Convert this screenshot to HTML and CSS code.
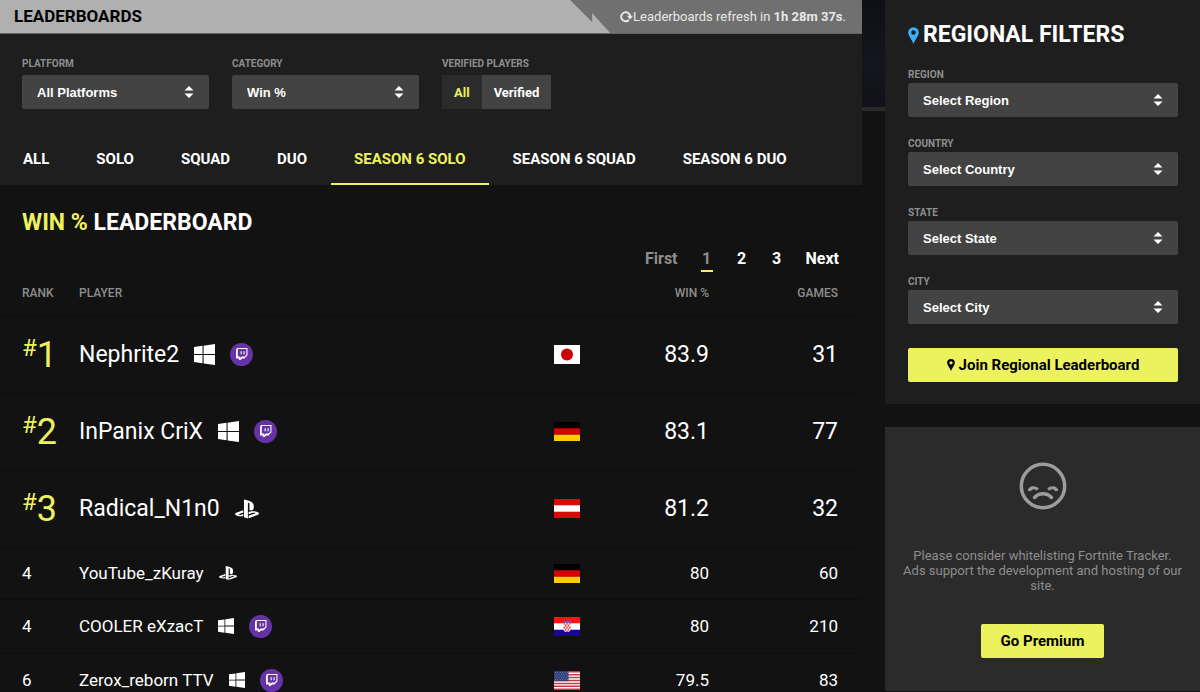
FILE: index.html
```html
<!DOCTYPE html>
<html lang="en">
<head>
<meta charset="utf-8">
<title>Leaderboards</title>
<meta name="viewport" content="width=device-width, initial-scale=1">
<link rel="stylesheet" href="styles.css">
</head>
<body>
<svg class="sprite" aria-hidden="true">
  <symbol id="windows" viewBox="0 0 24 24"><path d="M0 3.449L9.75 2.1v9.451H0m10.949-9.602L24 0v11.4H10.949M0 12.6h9.75v9.451L0 20.699M10.949 12.6H24V24l-12.9-1.801"/></symbol>
  <symbol id="playstation" viewBox="0 0 24 24"><path d="M8.984 2.596v17.547l3.915 1.261V6.688c0-.69.304-1.151.794-.991.636.18.76.814.76 1.505v5.875c2.441 1.193 4.362-.002 4.362-3.152 0-3.237-1.126-4.675-4.438-5.827-1.307-.448-3.728-1.186-5.39-1.502zm4.656 16.241l6.296-2.275c.715-.258.826-.625.246-.818-.586-.192-1.637-.139-2.357.123l-4.205 1.5V14.98l.24-.085s1.201-.42 2.913-.615c1.696-.18 3.785.03 5.437.661 1.848.601 2.04 1.472 1.576 2.072-.465.6-1.622 1.036-1.622 1.036l-8.544 3.107V18.86zM1.807 18.6c-1.9-.545-2.214-1.668-1.352-2.32.801-.586 2.16-1.052 2.16-1.052l5.615-2.013v2.313L4.205 17c-.705.271-.825.632-.239.826.586.195 1.637.15 2.343-.12L8.247 17v2.074c-.12.03-.256.044-.39.073-1.939.331-3.996.196-6.038-.479z"/></symbol>
  <symbol id="twitch" viewBox="0 0 46 46"><circle cx="23" cy="23" r="23" fill="#6533a5"/><path fill="#fff" transform="translate(11.500 10)" d="M2.149 0l-1.612 4.119v16.836h5.731v3.045h3.224l3.045-3.045h4.657l6.269-6.269v-14.686h-21.314zm19.164 13.612l-3.582 3.582h-5.731l-3.045 3.045v-3.045h-4.836v-15.045h17.194v11.463zm-3.582-7.343v6.262h-2.149v-6.262h2.149zm-5.731 0v6.262h-2.149v-6.262h2.149z"/></symbol>
  <symbol id="arrows" viewBox="0 0 10 12"><path d="M5 0l4.500 4.600H.5zM5 12L.5 7.400h9z"/></symbol>
  <symbol id="pin" viewBox="0 0 12 18"><path fill-rule="evenodd" d="M6 0a5.800 5.800 0 0 0-5.800 5.800C.2 9 3.500 12.500 6 18c2.500-5.500 5.800-9 5.800-12.200A5.800 5.800 0 0 0 6 0zm0 3.300a2.500 2.500 0 1 1 0 5 2.500 2.500 0 0 1 0-5z"/></symbol>
  <symbol id="flag-jp" viewBox="0 0 26 19"><path fill="#fff" d="M0 0h26v19H0z"/><circle cx="13" cy="9.500" r="6" fill="#d00000"/></symbol>
  <symbol id="flag-de" viewBox="0 0 26 19"><path fill="#000" d="M0 0h26v6.300H0z"/><path fill="#d80000" d="M0 6.300h26v6.400H0z"/><path fill="#fc0" d="M0 12.700h26V19H0z"/></symbol>
  <symbol id="flag-at" viewBox="0 0 26 19"><path fill="#d90a0a" d="M0 0h26v19H0z"/><path fill="#fff" d="M0 6.300h26v6.400H0z"/></symbol>
  <symbol id="flag-hr" viewBox="0 0 26 19"><path fill="#fff" d="M0 0h26v19H0z"/><path fill="#f11" d="M0 0h26v6.300H0z"/><path fill="#17069a" d="M0 12.700h26V19H0z"/><path fill="#fff" d="M9.500 5.500h7v6a3.500 3.500 0 0 1-7 0z"/><path fill="#e8343c" d="M9.500 5.500h1.400v2H9.500zm2.800 0h1.400v2h-1.400zm2.800 0h1.400v2h-1.400zm-4.200 2h1.400v2h-1.400zm2.800 0h1.400v2h-1.400zm-4.200 2h1.400v2H9.500zm2.800 0h1.400v2h-1.400zm2.800 0h1.400v2h-1.400zm-4.200 2h1.400v2h-1.400zm2.800 0h1.400v2h-1.400zm-1.400 2h1.400V15h-1.400z"/><path fill="#4a66b8" d="M9 3.300l1.300 1 1.200-1.300 1.500 1 1.500-1 1.200 1.300 1.300-1-.5 2.500h-7z"/></symbol>
  <symbol id="flag-us" viewBox="0 0 26 19"><path fill="#fff" d="M0 0h26v19H0z"/><path stroke="#bd3d44" stroke-width="1.460" d="M0 .73h26M0 3.650h26M0 6.570h26M0 9.500h26M0 12.420h26M0 15.340h26M0 18.270h26"/><path fill="#2a3f78" d="M0 0h14.500v10.200H0z"/><path stroke="#a9b3cf" stroke-width=".7" stroke-dasharray=".8 1.600" d="M1 1.500h13M2.200 3.300h11M1 5.100h13M2.200 6.900h11M1 8.700h13"/></symbol>
</svg>

<div class="page">
  <main class="main">
    <header class="topbar">
      <h1 class="topbar-title">Leaderboards</h1>
      <p class="refresh">
        <svg class="refresh-icon" viewBox="0 0 12 12" aria-hidden="true"><path fill="none" stroke="currentColor" stroke-width="1.800" d="M8.200 9.300A4.200 4.200 0 1 1 9.500 6"/><path fill="currentColor" d="M6.300 5.200H12L9.300 8.800z"/></svg><span>Leaderboards refresh in <b>1h 28m 37s</b>.</span>
      </p>
    </header>

    <section class="controls">
      <div class="filters">
        <div class="field field-narrow">
          <label class="label" for="platform">Platform</label>
          <div class="select"><select id="platform"><option>All Platforms</option></select><svg aria-hidden="true"><use href="#arrows"/></svg></div>
        </div>
        <div class="field field-narrow">
          <label class="label" for="category">Category</label>
          <div class="select"><select id="category"><option>Win %</option></select><svg aria-hidden="true"><use href="#arrows"/></svg></div>
        </div>
        <div class="field">
          <span class="label" id="verified-label">Verified Players</span>
          <div class="toggle" role="group" aria-labelledby="verified-label">
            <button class="toggle-item toggle-on" type="button" aria-pressed="true">All</button>
            <button class="toggle-item" type="button" aria-pressed="false">Verified</button>
          </div>
        </div>
      </div>
      <nav class="tabs" aria-label="Playlists">
        <a class="tab" href="#all">All</a>
        <a class="tab" href="#solo">Solo</a>
        <a class="tab" href="#squad">Squad</a>
        <a class="tab" href="#duo">Duo</a>
        <a class="tab tab-on" href="#s6-solo" aria-current="page">Season 6 Solo</a>
        <a class="tab" href="#s6-squad">Season 6 Squad</a>
        <a class="tab" href="#s6-duo">Season 6 Duo</a>
      </nav>
    </section>

    <section class="board">
      <h2 class="heading"><span class="accent">Win %</span> Leaderboard</h2>
      <nav class="pager" aria-label="Pages">
        <span class="pager-item pager-off">First</span>
        <span class="pager-item pager-off pager-num pager-on" aria-current="page">1</span>
        <a class="pager-item pager-num" href="#page-2">2</a>
        <a class="pager-item pager-num" href="#page-3">3</a>
        <a class="pager-item" href="#page-next">Next</a>
      </nav>
      <table class="table">
        <thead>
          <tr><th class="col-rank">Rank</th><th>Player</th><th class="col-flag"></th><th class="col-win">Win %</th><th class="col-games">Games</th></tr>
        </thead>
        <tbody>
          <tr class="top">
            <td class="col-rank"><span class="place"><span class="hash">#</span>1</span></td>
            <td><div class="player"><a href="#p1">Nephrite2</a><svg class="platform"><use href="#windows"/></svg><svg class="twitch"><use href="#twitch"/></svg></div></td>
            <td class="col-flag"><svg class="flag"><use href="#flag-jp"/></svg></td><td class="col-win">83.9</td><td class="col-games">31</td>
          </tr>
          <tr class="top">
            <td class="col-rank"><span class="place"><span class="hash">#</span>2</span></td>
            <td><div class="player"><a href="#p2">InPanix CriX</a><svg class="platform"><use href="#windows"/></svg><svg class="twitch"><use href="#twitch"/></svg></div></td>
            <td class="col-flag"><svg class="flag"><use href="#flag-de"/></svg></td><td class="col-win">83.1</td><td class="col-games">77</td>
          </tr>
          <tr class="top">
            <td class="col-rank"><span class="place"><span class="hash">#</span>3</span></td>
            <td><div class="player"><a href="#p3">Radical_N1n0</a><svg class="platform playstation"><use href="#playstation"/></svg></div></td>
            <td class="col-flag"><svg class="flag"><use href="#flag-at"/></svg></td><td class="col-win">81.2</td><td class="col-games">32</td>
          </tr>
          <tr>
            <td class="col-rank">4</td>
            <td><div class="player"><a href="#p4">YouTube_zKuray</a><svg class="platform playstation"><use href="#playstation"/></svg></div></td>
            <td class="col-flag"><svg class="flag"><use href="#flag-de"/></svg></td><td class="col-win">80</td><td class="col-games">60</td>
          </tr>
          <tr>
            <td class="col-rank">4</td>
            <td><div class="player"><a href="#p5">COOLER eXzacT</a><svg class="platform"><use href="#windows"/></svg><svg class="twitch"><use href="#twitch"/></svg></div></td>
            <td class="col-flag"><svg class="flag"><use href="#flag-hr"/></svg></td><td class="col-win">80</td><td class="col-games">210</td>
          </tr>
          <tr>
            <td class="col-rank">6</td>
            <td><div class="player"><a href="#p6">Zerox_reborn TTV</a><svg class="platform"><use href="#windows"/></svg><svg class="twitch"><use href="#twitch"/></svg></div></td>
            <td class="col-flag"><svg class="flag"><use href="#flag-us"/></svg></td><td class="col-win">79.5</td><td class="col-games">83</td>
          </tr>
        </tbody>
      </table>
    </section>
  </main>

  <div class="backdrop"></div>

  <aside class="side">
    <form class="regional">
      <h2 class="heading regional-title"><svg class="title-pin" aria-hidden="true"><use href="#pin"/></svg>Regional Filters</h2>
      <div class="field">
        <label class="label" for="region">Region</label>
        <div class="select"><select id="region"><option>Select Region</option></select><svg aria-hidden="true"><use href="#arrows"/></svg></div>
      </div>
      <div class="field">
        <label class="label" for="country">Country</label>
        <div class="select"><select id="country"><option>Select Country</option></select><svg aria-hidden="true"><use href="#arrows"/></svg></div>
      </div>
      <div class="field">
        <label class="label" for="state">State</label>
        <div class="select"><select id="state"><option>Select State</option></select><svg aria-hidden="true"><use href="#arrows"/></svg></div>
      </div>
      <div class="field">
        <label class="label" for="city">City</label>
        <div class="select"><select id="city"><option>Select City</option></select><svg aria-hidden="true"><use href="#arrows"/></svg></div>
      </div>
      <button class="button" type="button"><svg class="button-pin" aria-hidden="true"><use href="#pin"/></svg>Join Regional Leaderboard</button>
    </form>

    <section class="notice">
      <svg class="frown" viewBox="0 0 48 48" aria-hidden="true"><g fill="none" stroke="currentColor" stroke-width="3.500" stroke-linecap="round"><circle cx="24" cy="24" r="21.700"/><path d="M15.500 35.500c4.500-4.900 12.500-4.900 17 0"/><path stroke-width="3.200" stroke-linecap="butt" d="M10.200 29c.8-3.400 5-4.400 8.600-1.600M37.800 29c-.8-3.400-5-4.400-8.600-1.600"/></g></svg>
      <p class="notice-text">Please consider whitelisting Fortnite Tracker. Ads support the development and hosting of our site.</p>
      <button class="button" type="button">Go Premium</button>
    </section>
  </aside>
</div>
</body>
</html>
```
FILE: styles.css
```css
* {
  box-sizing: border-box;
}

body {
  margin: 0;
  height: 100vh;
  overflow: hidden;
  background: #121212;
  color: #fff;
  font-family: Roboto, "Liberation Sans", sans-serif;
}

h1, h2, p {
  margin: 0;
}

a {
  color: inherit;
  text-decoration: none;
}

button, select {
  border: 0;
  margin: 0;
  font-family: inherit;
}

svg {
  display: block;
  flex: none;
  fill: currentColor;
}

.sprite {
  position: absolute;
  width: 0;
  height: 0;
}

.accent {
  color: #ecf15e;
}

.page {
  display: flex;
  align-items: flex-start;
}

.main {
  flex: 1;
  min-width: 0;
}

.backdrop {
  width: 23px;
  height: 111px;
  background: linear-gradient(#0f0f16, #15151f 60%, #111117);
  border-bottom: 4px solid #2a2a2a;
}

.side {
  width: 315px;
  display: flex;
  flex-direction: column;
  gap: 23px;
}

/* Title bar */
.topbar {
  display: flex;
  justify-content: space-between;
  height: 34px;
  background: #b0b0b0;
  border-bottom: 1px solid #656565;
  color: #000;
}

.topbar-title {
  padding-left: 14px;
  font-size: 17px;
  line-height: 32px;
  font-weight: 700;
  text-transform: uppercase;
}

.refresh {
  display: flex;
  align-items: center;
  padding: 0 16px 0 50px;
  background: #707070;
  color: #e8e8e8;
  font-size: 13px;
  clip-path: polygon(0 0, 100% 0, 100% 100%, 40px 100%, 22px 13px, 22px 22px);
}

.refresh-icon {
  width: 13px;
  height: 13px;
}

/* Filters and tabs */
.controls {
  background: #1e1e1e;
  padding-top: 24px;
}

.filters {
  display: flex;
  gap: 23px;
  padding: 0 22px;
}

.field-narrow {
  width: 187px;
}

.label {
  display: block;
  margin-bottom: 5px;
  color: #8e8e8e;
  font-size: 10px;
  line-height: 12px;
  font-weight: 700;
  text-transform: uppercase;
}

.select {
  position: relative;
}

.select select {
  appearance: none;
  display: block;
  width: 100%;
  height: 34px;
  padding: 0 15px;
  border-radius: 2px;
  background: #434343;
  color: #fff;
  font: 700 13px "Liberation Sans", Arial, sans-serif;
}

.select svg {
  position: absolute;
  top: 11px;
  right: 15px;
  width: 10px;
  height: 12px;
  pointer-events: none;
}

.toggle {
  display: flex;
}

.toggle-item {
  height: 34px;
  padding: 0 12px;
  background: #434343;
  color: #fff;
  font-size: 13px;
  font-weight: 700;
}

.toggle-on {
  background: #2b2b2b;
  color: #ecf15e;
}

.tabs {
  display: flex;
  gap: 1px;
  margin-top: 23px;
}

.tab {
  padding: 15px 23px 12px;
  border-bottom: 2px solid transparent;
  font-size: 15px;
  line-height: 24px;
  font-weight: 700;
  text-transform: uppercase;
}

.tab-on {
  border-color: #ecf15e;
  color: #ecf15e;
}

/* Leaderboard */
.heading {
  font-size: 23px;
  line-height: 26px;
  font-weight: 700;
  text-transform: uppercase;
}

.board {
  padding-top: 25px;
}

.board .heading {
  padding-left: 22px;
}

.pager {
  display: flex;
  justify-content: flex-end;
  gap: 23px;
  padding: 11px 23px 0 0;
}

.pager-item {
  height: 25px;
  font-size: 16px;
  line-height: 24px;
  font-weight: 700;
  border-bottom: 2px solid transparent;
}

.pager-off {
  color: #8e8e8e;
}

.pager-num {
  width: 12px;
  text-align: center;
}

.pager-on {
  border-color: #ecf15e;
}

.table {
  width: 100%;
  border-collapse: collapse;
  table-layout: fixed;
  font-size: 17px;
  line-height: 21px;
}

.table th {
  height: 44px;
  padding: 0;
  color: #8e8e8e;
  font-size: 12px;
  font-weight: 500;
  text-align: left;
  text-transform: uppercase;
}

.table td {
  padding: 15px 0;
  border-top: 1px solid #0d0d0d;
}

.table .top td {
  height: 77px;
  font-size: 23px;
}

.table .col-rank {
  width: 79px;
  padding-left: 22px;
}

.table .col-flag {
  width: 80px;
}

.table .col-win {
  width: 75px;
  text-align: right;
}

.table .col-games {
  width: 153px;
  padding-right: 24px;
  text-align: right;
}

.place {
  display: flex;
  align-items: flex-start;
  color: #ecf15e;
  font-size: 36px;
  line-height: 42px;
}

.hash {
  font-size: 24px;
  line-height: 28px;
}

.player {
  display: flex;
  align-items: center;
  gap: 15px;
}

.platform {
  width: 16px;
  height: 16px;
}

.playstation {
  width: 18px;
  height: 18px;
}

.top .platform {
  width: 21px;
  height: 21px;
}

.top .playstation {
  width: 24px;
  height: 24px;
}

.twitch {
  width: 23px;
  height: 23px;
}

.flag {
  width: 26px;
  height: 19px;
}

/* Sidebar */
.regional {
  display: flex;
  flex-direction: column;
  gap: 21px;
  padding: 22px 22px 22px 23px;
  background: #1e1e1e;
}

.regional .label {
  margin-bottom: 2px;
}

.regional .button {
  margin-top: 3px;
}

.regional-title {
  display: flex;
  align-items: center;
  gap: 4px;
  white-space: nowrap;
}

.title-pin {
  width: 11px;
  height: 17px;
  color: #3fb0f5;
}

.button {
  display: flex;
  align-items: center;
  justify-content: center;
  gap: 4px;
  height: 34px;
  padding: 0 20px;
  border-radius: 2px;
  background: #ecf15e;
  color: #000;
  font-size: 15px;
  font-weight: 700;
}

.button-pin {
  width: 8px;
  height: 12px;
}

.notice {
  display: flex;
  flex-direction: column;
  align-items: center;
  padding: 35px 17px 33px;
  background: #2b2b2b;
  color: #8e8e8e;
}

.frown {
  width: 48px;
  height: 48px;
  color: #9c9c9c;
}

.notice-text {
  margin: 38px 0 31px;
  font-size: 13px;
  line-height: 15px;
  text-align: center;
}
```
